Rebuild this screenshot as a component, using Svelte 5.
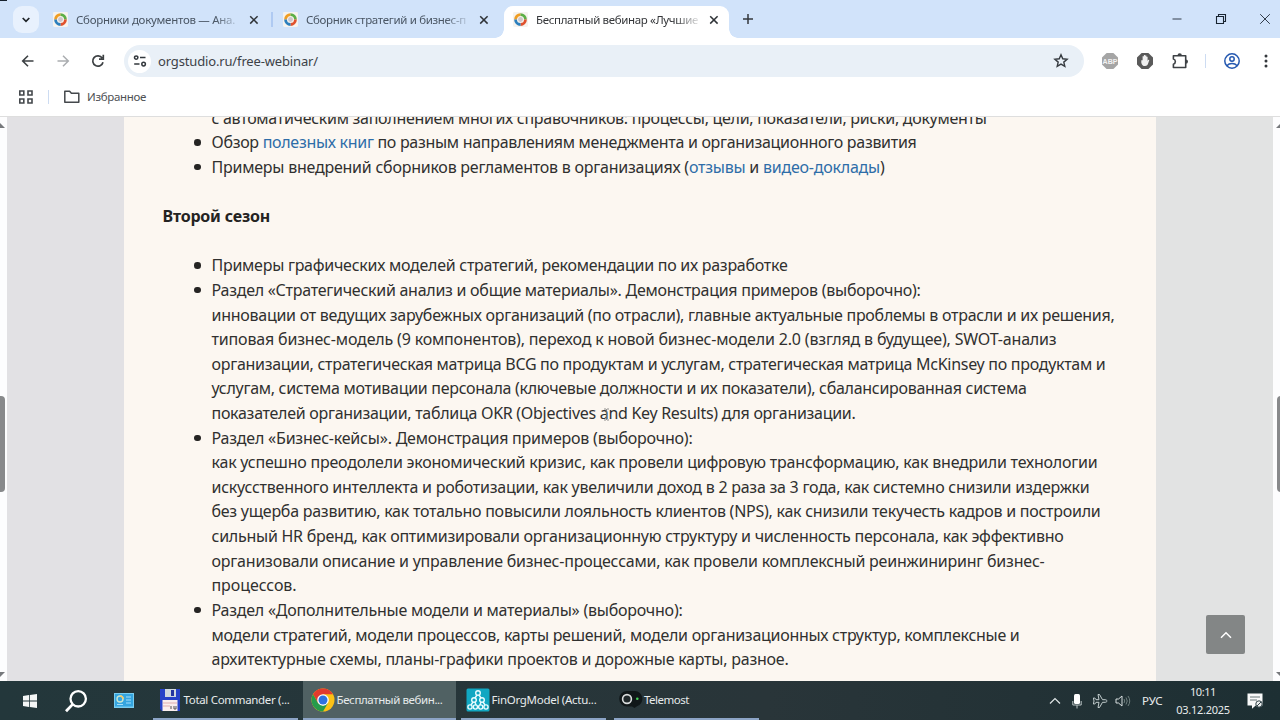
<script>
  const tabs = [
    { title: "Сборники документов — Ана.", width: 159 },
    { title: "Сборник стратегий и бизнес-п", width: 160 },
    { title: "Бесплатный вебинар «Лучшие", width: 162, active: true },
  ];

  // each line is [width, ...parts]; linked parts are { linked }
  const first = [
    { lines: [[775, "с автоматическим заполнением многих справочников: процессы, цели, показатели, риски, документы"]], cont: true },
    { lines: [[705, "Обзор ", { linked: "полезных книг" }, " по разным направлениям менеджмента и организационного развития"]] },
    { lines: [[673, "Примеры внедрений сборников регламентов в организациях (", { linked: "отзывы" }, " и ", { linked: "видео-доклады" }, ")"]] },
  ];

  const second = [
    { lines: [[576, "Примеры графических моделей стратегий, рекомендации по их разработке"]] },
    {
      lines: [
        [709, "Раздел «Стратегический анализ и общие материалы». Демонстрация примеров (выборочно):"],
        [903, "инновации от ведущих зарубежных организаций (по отрасли), главные актуальные проблемы в отрасли и их решения,"],
        [845, "типовая бизнес-модель (9 компонентов), переход к новой бизнес-модели 2.0 (взгляд в будущее), SWOT-анализ"],
        [894, "организации, стратегическая матрица BCG по продуктам и услугам, стратегическая матрица McKinsey по продуктам и"],
        [815, "услугам, система мотивации персонала (ключевые должности и их показатели), сбалансированная система"],
        [644, "показателей организации, таблица OKR (Objectives and Key Results) для организации."],
      ],
    },
    {
      lines: [
        [481, "Раздел «Бизнес-кейсы». Демонстрация примеров (выборочно):"],
        [886, "как успешно преодолели экономический кризис, как провели цифровую трансформацию, как внедрили технологии"],
        [878, "искусственного интеллекта и роботизации, как увеличили доход в 2 раза за 3 года, как системно снизили издержки"],
        [889, "без ущерба развитию, как тотально повысили лояльность клиентов (NPS), как снизили текучесть кадров и построили"],
        [852, "сильный HR бренд, как оптимизировали организационную структуру и численность персонала, как эффективно"],
        [833, "организовали описание и управление бизнес-процессами, как провели комплексный реинжиниринг бизнес-"],
        [85, "процессов."],
      ],
    },
    {
      lines: [
        [471, "Раздел «Дополнительные модели и материалы» (выборочно):"],
        [808, "модели стратегий, модели процессов, карты решений, модели организационных структур, комплексные и"],
        [577, "архитектурные схемы, планы-графики проектов и дорожные карты, разное."],
      ],
    },
  ];

  const tasks = [
    { icon: "floppy", title: "Total Commander (...", width: 106 },
    { icon: "chrome", title: "Бесплатный вебин...", width: 106, active: true },
    { icon: "model", title: "FinOrgModel (Actu...", width: 105 },
    { icon: "telemost", title: "Telemost", width: 45 },
  ];

  // spread the letters so that the text takes the given width
  function fit(node, width) {
    const now = node.getBoundingClientRect().width;
    const count = node.textContent.length;
    node.style.letterSpacing = (width - now) / count + "px";
  }
</script>

{#snippet favicon()}
  <svg class="favicon" viewBox="0 0 16 16">
    <rect width="16" height="16" rx="1.5" fill="#f6f3ee" />
    <g fill="none" stroke-width="3">
      <path d="M2.7 8A5.3 5.3 0 0 1 8 2.7" stroke="#ef9d24" />
      <path d="M8 2.7A5.3 5.3 0 0 1 13.3 8" stroke="#5daf46" />
      <path d="M13.3 8A5.3 5.3 0 0 1 8 13.3" stroke="#e0512d" />
      <path d="M8 13.3A5.3 5.3 0 0 1 2.7 8" stroke="#2c7fbd" />
    </g>
    <circle cx="8" cy="8" r="2.6" fill="#cfc6c8" />
  </svg>
{/snippet}

{#snippet cross()}
  <svg class="cross" viewBox="0 0 10 10"><path d="M1.2 1.2l7.4 7.4M8.6 1.2L1.2 8.6" stroke="#303438" stroke-width="1.5" /></svg>
{/snippet}

{#snippet list(items)}
  <ul>
    {#each items as item}
      <li class:cont={item.cont}>
        {#each item.lines as [width, ...parts]}
          <div class="line"><span use:fit={width}>{#each parts as p}{#if p.linked}<a href="#top">{p.linked}</a>{:else}{p}{/if}{/each}</span></div>
        {/each}
      </li>
    {/each}
  </ul>
{/snippet}

<div class="screen">
  <div class="tabstrip">
    <i class="corner"></i>
    <div class="search-tabs">
      <svg width="10" height="8" viewBox="0 0 10 8"><path d="M1.7 2L5 5.3 8.3 2" fill="none" stroke="#1f2428" stroke-width="1.7" /></svg>
    </div>
    {#each tabs as tab}
      <div class="tab" class:active={tab.active}>
        {@render favicon()}
        <div class="title"><span use:fit={tab.width}>{tab.title}</span></div>
        {@render cross()}
      </div>
    {/each}
    <svg class="plus" width="12" height="12" viewBox="0 0 12 12"><path d="M6 1v10M1 6h10" stroke="#34383d" stroke-width="1.5" /></svg>
    <div class="window-buttons">
      <svg width="12" height="12" viewBox="0 0 12 12"><path d="M1.5 6h9" stroke="#333d4a" /></svg>
      <svg width="12" height="12" viewBox="0 0 12 12" fill="none" stroke="#182430"><path d="M1.5 3.5h7v7h-7zM3.5 3V1.5h7v7H9" stroke-width="1.1" /></svg>
      <svg width="12" height="12" viewBox="0 0 12 12"><path d="M1.2 1.2l9.6 9.6M10.8 1.2l-9.6 9.6" stroke="#333d4a" /></svg>
    </div>
  </div>

  <div class="toolbar">
    <div class="nav">
      <svg width="16" height="16" viewBox="0 0 16 16" fill="none" stroke="#3c4043" stroke-width="1.6"><path d="M13.5 8H3M8 2.7L2.7 8 8 13.3" /></svg>
      <svg width="16" height="16" viewBox="0 0 16 16" fill="none" stroke="#aaadb0" stroke-width="1.5"><path d="M2.5 8H13M8 2.7L13.3 8 8 13.3" /></svg>
      <svg width="16" height="16" viewBox="0 0 16 16" fill="none" stroke="#3c4043" stroke-width="1.7"><path d="M13 9.2A5.2 5.2 0 1 1 12.2 5M13.3 1.8v4.4H9" /></svg>
    </div>
    <div class="omnibox">
      <div class="site-info">
        <svg width="14" height="14" viewBox="0 0 14 14" fill="none" stroke="#33383d" stroke-width="1.5"><circle cx="3.2" cy="3.6" r="1.7" /><path d="M7 3.6h5.5M1.2 10.1h5.3" /><circle cx="10.6" cy="10.1" r="1.8" /></svg>
      </div>
      <span class="url"><span use:fit={160}>orgstudio.ru/free-webinar/</span></span>
      <svg class="star" width="16" height="16" viewBox="0 0 16 16"><path d="M8 1.8l1.75 4 4.35.4-3.3 2.9 1 4.3L8 11.1l-3.8 2.3 1-4.3-3.3-2.9 4.35-.4z" fill="none" stroke="#363b40" stroke-width="1.4" /></svg>
    </div>
    <div class="extensions">
      <svg width="18" height="18" viewBox="0 0 18 18"><path d="M5.6 1h6.8L17 5.6v6.8L12.4 17H5.6L1 12.4V5.6z" fill="#a5a5a5" /><text x="9" y="12" text-anchor="middle" fill="#f2f2f2">ABP</text></svg>
      <svg width="18" height="18" viewBox="0 0 18 18"><path d="M5.6 1h6.8L17 5.6v6.8L12.4 17H5.6L1 12.4V5.6z" fill="#5a5a5a" /><path d="M5.3 8.3v2.4c.6 2.1 1.6 3.4 3.7 3.4 1.9 0 2.8-1.1 3.3-3l1-3.1c-.7-.6-1.2-.2-1.7 1V4.8h-1.2V3.6H9.1v-.5H7.9v1.1H6.6v4z" fill="#f1f1f1" /></svg>
      <svg width="18" height="18" viewBox="0 0 18 18"><path d="M2.4 3.7H14.7V15.5H2.4V12.3C5 11.6 5 7.6 2.4 7z" fill="none" stroke="#3d4145" stroke-width="1.6" stroke-linejoin="round" /><path d="M6.5 3.5a2.2 2.2 0 0 1 4.4 0zM14.8 7.4a2.2 2.2 0 0 1 0 4.4z" fill="#3d4145" /></svg>
    </div>
    <i class="sep"></i>
    <svg class="profile" width="18" height="18" viewBox="0 0 18 18" fill="none" stroke="#2458b0" stroke-width="1.5"><circle cx="9" cy="9" r="7.2" /><circle cx="9" cy="7" r="2.2" /><path d="M3.8 13.8c2.8-3 7.6-3 10.4 0" /></svg>
    <svg class="more" width="4" height="16" viewBox="0 0 4 16" fill="#34383c"><circle cx="2" cy="3" r="1.5" /><circle cx="2" cy="8" r="1.5" /><circle cx="2" cy="13" r="1.5" /></svg>
  </div>

  <div class="bookmarks">
    <svg width="16" height="16" viewBox="0 0 16 16" fill="none" stroke="#44484c" stroke-width="1.6"><path d="M1.8 2h4v4h-4zM10 2h4v4h-4zM1.8 10h4v4h-4zM10 10h4v4h-4z" /></svg>
    <i class="sep"></i>
    <svg class="folder" width="18" height="16" viewBox="0 0 18 16"><path d="M1.8 2.2h4.8l1.8 2h7.4v9H1.8z" fill="none" stroke="#44484c" stroke-width="1.5" stroke-linejoin="round" /></svg>
    <span><span use:fit={59}>Избранное</span></span>
  </div>

  <div class="page">
    <div class="scroll left"><i class="up"></i><i class="thumb"></i><i class="down"></i></div>
    <main>
      {@render list(first)}
      <h2><span use:fit={107.5}>Второй сезон</span></h2>
      {@render list(second)}
    </main>
    <div class="scroll right"><i class="up"></i><i class="thumb"></i><i class="down"></i></div>
    <button class="to-top" aria-label="Наверх">
      <svg width="14" height="10" viewBox="0 0 14 10"><path d="M2 7.7l5-5 5 5" fill="none" stroke="#fff" stroke-width="1.5" /></svg>
    </button>
    <svg class="caret" width="7" height="13" viewBox="0 0 7 13"><path d="M1 1h2l.5.5L4 1h2M3.5 1.5v10M1 12h2l.5-.5.5.5h2" fill="none" stroke="#777" stroke-width=".8" /></svg>
  </div>

  <div class="taskbar">
    <svg class="start" width="14" height="14" viewBox="0 0 14 14" fill="#f4f6f6"><path d="M0 2l6-.9v5.5H0zM6.8 1L14 0v6.6H6.8zM0 7.4h6v5.5L0 12zM6.8 7.4H14V14l-7.2-1z" /></svg>
    <svg class="search" width="24" height="24" viewBox="0 0 24 24" fill="none" stroke="#fff" stroke-width="2.3"><circle cx="14.2" cy="9.8" r="7.7" /><path d="M8.6 15.4L2 22.3" stroke-width="2.8" /></svg>
    <svg class="panel" width="20" height="16" viewBox="0 0 20 16"><rect width="20" height="15" fill="#79cdf1" /><rect x="1" y="1" width="18" height="12.5" fill="#35a5df" /><circle cx="6" cy="6" r="3" fill="none" stroke="#c8e6d1" stroke-width="1.4" /><path d="M6 3a3 3 0 0 1 3 3" fill="none" stroke="#f4ca69" stroke-width="1.5" /><path d="M12 4h5M12 7h5M12 10h5M3 11.5h6" stroke="#a5defa" /></svg>
    {#each tasks as task}
      <div class="task" class:active={task.active}>
        {#if task.icon === "floppy"}
          <svg width="24" height="24" viewBox="0 0 24 24"><path d="M2 1h20v22H4l-2-2z" fill="#2642c8" /><path d="M7 1h11v8H7z" fill="#cfd8df" /><path d="M13 2h3v6h-3z" fill="#2436a0" /><path d="M4.5 12h15v11h-15z" fill="#faeeed" /><path d="M5 15h14M5 18h7" stroke="#dfaeb0" /><path d="M13 18v3M16 18v3h2v-3" stroke="#555" fill="none" /></svg>
        {:else if task.icon === "chrome"}
          <svg width="24" height="24" viewBox="0 0 24 24"><circle cx="12" cy="12" r="11.5" fill="#fbc116" /><path d="M2 6.3A11.5 11.5 0 0 1 22 6.3H12L7 14.9z" fill="#e33b2e" /><path d="M2 6.3l5 8.6 5 2.8 5-2.8-5 8.6A11.5 11.5 0 0 1 2 6.3" fill="#269b4b" /><circle cx="12" cy="12" r="5.8" fill="#fff" /><circle cx="12" cy="12" r="4.5" fill="#2f72df" /></svg>
        {:else if task.icon === "model"}
          <svg width="24" height="24" viewBox="0 0 24 24"><rect x=".5" y=".5" width="23" height="23" rx="1.5" fill="#11a7c2" /><g fill="none" stroke="#e9fcff" stroke-width="1.4"><path d="M11 7l-2 3M13 7l2 3M7 14l-2 3M9 14l1 3M15 14l-1 3M17 14l2 3" /><circle cx="12" cy="5" r="2.3" /><circle cx="8" cy="12" r="2.3" /><circle cx="16" cy="12" r="2.3" /><circle cx="4" cy="19" r="2.1" /><circle cx="9.4" cy="19" r="2.1" /><circle cx="14.7" cy="19" r="2.1" /><circle cx="20" cy="19" r="2.1" /></g></svg>
        {:else}
          <svg width="24" height="24" viewBox="0 0 24 24"><path d="M8 3h8a7.8 7.8 0 0 1 2 15.2L15.5 20 13 18.6H8A7.8 7.8 0 0 1 8 3" fill="#101719" /><circle cx="8" cy="11" r="4.4" fill="#20282a" stroke="#dadddd" stroke-width="1.6" /><circle cx="18.3" cy="10.7" r="1.3" fill="#45cf58" /></svg>
        {/if}
        <span class="label"><span use:fit={task.width}>{task.title}</span></span>
      </div>
    {/each}
    <div class="tray">
      <svg width="12" height="12" viewBox="0 0 12 12"><path d="M1 8.5l5-5 5 5" fill="none" stroke="#dfe5e6" stroke-width="1.2" /></svg>
      <svg width="10" height="16" viewBox="0 0 10 16"><rect x="2" y="1" width="6" height="10" rx="1.5" fill="#fff" /><path d="M.8 8v4h8.4V8M5 12v3.5" fill="none" stroke="#b9c3c4" /></svg>
      <svg width="16" height="16" viewBox="0 0 16 16"><path d="M15 8c0-.8-1-1.3-2-1.3h-2.5L7.5 1.5H6l1 5.2H4L2.8 5H1.4L2 8l-.6 3h1.4L4 9.3h3l-1 5.2h1.5l3-5.2H13c1 0 2-.5 2-1.3z" fill="none" stroke="#c3cdce" /></svg>
      <svg width="16" height="14" viewBox="0 0 16 14" fill="none"><path d="M1 5h2.5L7 2v10L3.5 9H1z" stroke="#d8dfe0" /><path d="M9 5q1.5 2 0 4M11 3.5q2.5 3.5 0 7M13 2q3.5 5 0 10" stroke="#70807f" /></svg>
    </div>
    <span class="lang"><span use:fit={20.5}>РУС</span></span>
    <div class="clock"><span><span use:fit={26}>10:11</span></span><span><span use:fit={53.5}>03.12.2025</span></span></div>
    <svg class="notes" width="18" height="18" viewBox="0 0 18 18"><path d="M1.5 1.5h15v12H9.7L6 16.8v-3.3H1.5z" fill="#f8f9f9" /><path d="M4 5h10M4 8h7" stroke="#677577" /><circle cx="13" cy="12" r="3.2" fill="#ecefef" stroke="#304247" /><path d="M11 14l4-4" stroke="#304247" /></svg>
  </div>
</div>

<style>
  :global(body) { margin: 0; }

  .screen {
    width: 1280px;
    height: 720px;
    overflow: hidden;
    display: flex;
    flex-direction: column;
    background: #fff;
    color: #30302f;
    font-family: "Noto Sans", "Open Sans", sans-serif;
    white-space: nowrap;
  }
  svg { display: block; flex: none; }
  i { display: block; flex: none; }

  .tabstrip {
    position: relative;
    box-sizing: border-box;
    height: 38px;
    flex: none;
    display: flex;
    padding: 6px 8px 0 13px;
    background: #d1e3fa;
  }
  .corner { position: absolute; top: 0; left: 0; width: 7px; height: 1px; background: #17212d; }
  .search-tabs {
    width: 26px;
    height: 27px;
    border-radius: 9px;
    background: #e8f1fd;
    display: grid;
    place-items: center;
  }
  .tab {
    position: relative;
    box-sizing: border-box;
    width: 230px;
    height: 32px;
    display: flex;
    align-items: flex-start;
    padding: 6px 0 0 14px;
    color: #4a5664;
    font-size: 11.5px;
  }
  .tab:nth-of-type(2)::after {
    content: "";
    position: absolute;
    top: 6px;
    right: -4px;
    width: 2px;
    height: 15px;
    background: #afcaf2;
  }
  .tab.active { width: 225px; margin-left: 5px; padding-left: 9px; background: #fff; border-radius: 9px 9px 0 0; color: #343639; }
  .tab.active::before, .tab.active::after {
    content: "";
    position: absolute;
    bottom: 0;
    width: 9px;
    height: 9px;
  }
  .tab.active::before { left: -9px; background: radial-gradient(circle at 0 0, #d1e3fa 8.5px, #fff 9px); }
  .tab.active::after { right: -9px; background: radial-gradient(circle at 100% 0, #d1e3fa 8.5px, #fff 9px); }
  .favicon { width: 15px; height: 15px; }
  .title {
    width: 163px;
    margin-left: 8px;
    line-height: 16px;
    mask-image: linear-gradient(90deg, #000 139px, transparent 166px);
  }
  .cross { width: 10px; height: 10px; margin: 3px 0 0 10px; }
  .plus { margin: 7px 0 0 13px; }
  .window-buttons { display: flex; gap: 32px; margin: 7px 0 0 auto; }
  .window-buttons svg:last-child { margin-right: 1px; }

  .toolbar {
    position: relative;
    height: 46px;
    flex: none;
    display: flex;
    align-items: center;
    padding-left: 20px;
  }
  .nav { display: flex; gap: 19px; width: 104px; }
  .omnibox {
    box-sizing: border-box;
    width: 960px;
    height: 32px;
    display: flex;
    align-items: center;
    padding: 0 15px 0 4px;
    border-radius: 16px;
    background: #e9f0f7;
  }
  .site-info { width: 23px; height: 23px; border-radius: 50%; background: #fff; display: grid; place-items: center; }
  .url { margin-left: 7px; font-size: 13px; color: #3d4248; }
  .star { margin-left: auto; }
  .extensions { display: flex; gap: 17px; margin-left: 17px; }
  .extensions text { font: bold 7px "Liberation Sans", sans-serif; }
  .sep { width: 1px; height: 14px; background: #cddcf2; }
  .toolbar .sep { margin-left: 16px; }
  .profile { margin-left: 17px; }
  .more { margin-left: 23px; }

  .bookmarks {
    box-sizing: border-box;
    height: 33px;
    flex: none;
    display: flex;
    align-items: center;
    padding: 0 0 7px 18px;
    border-bottom: 1px solid #dedede;
    font-size: 11.5px;
    color: #4e5154;
  }
  .bookmarks .sep { margin: 0 14px 0 14px; }
  .bookmarks > span { margin-left: 6px; }

  .page {
    position: relative;
    box-sizing: border-box;
    height: 564px;
    flex: none;
    display: flex;
    overflow: hidden;
    background: linear-gradient(90deg, #e2e1e4 50%, #e2e3e3 50%);
  }
  .scroll { position: relative; width: 7px; flex: none; overflow: hidden; background: #fdfdfe; }
  .scroll.right { margin-left: auto; }
  .thumb { position: absolute; top: 279px; width: 9px; height: 96px; border-radius: 4px; background: #88898b; }
  .left .thumb { right: 2px; }
  .right .thumb { left: 4px; }
  .up, .down { position: absolute; border: 5px solid transparent; }
  .left i.up, .left i.down { left: -5px; }
  .right i.up, .right i.down { left: 3px; }
  .up { top: 6px; border-bottom-color: #77797c; border-top: 0; }
  .down { top: 555px; border-top-color: #77797c; border-bottom: 0; }
  main {
    box-sizing: border-box;
    width: 1032px;
    height: 564px;
    margin-left: 117px;
    padding-left: 38.5px;
    background: #fcf7f1;
    font-size: 16px;
    line-height: 24.62px;
  }
  ul { margin: 0; padding: 0 0 0 49px; list-style: none; }
  ul:first-child { margin-top: -11.3px; }
  li { position: relative; }
  li::before {
    content: "";
    position: absolute;
    left: -17.5px;
    top: 9px;
    width: 6.5px;
    height: 6.5px;
    border-radius: 50%;
    background: #252423;
  }
  li.cont::before { display: none; }
  .line { height: 24.62px; }
  a { color: #2e6da8; text-decoration: none; }
  h2 { margin: 24.62px 0; font-size: 16px; line-height: 24.62px; font-weight: 700; color: #242322; }
  .to-top {
    position: absolute;
    left: 1206px;
    top: 498px;
    width: 39px;
    height: 39px;
    padding: 0;
    border: 0;
    border-radius: 2px;
    background: #838686;
    display: grid;
    place-items: center;
  }
  .caret { position: absolute; left: 603px; top: 291px; }

  .taskbar {
    box-sizing: border-box;
    height: 39px;
    flex: none;
    display: flex;
    align-items: center;
    padding-left: 23px;
    background: linear-gradient(90deg, #23373b, #293539 60%, #1d2f33);
    color: #e7ebec;
    font-size: 11.5px;
  }
  .search { margin-left: 27px; }
  .panel { margin: 0 10px 0 26px; }
  .task {
    box-sizing: border-box;
    width: 145px;
    height: 39px;
    margin-left: 8.5px;
    padding-left: 5px;
    display: flex;
    align-items: center;
    border-bottom: 2px solid #8ca4c6;
  }
  .task.active { width: 153px; margin-left: 5px; padding-left: 8px; background: #506163; }
  .task.active + .task { margin-left: 5px; }
  .label { margin-left: 2px; }
  .task:nth-of-type(4) .label { margin-left: 1px; }
  .tray { display: flex; align-items: center; gap: 9px; margin-left: auto; }
  .tray svg:nth-child(2) { margin-left: 2px; }
  .tray svg:nth-child(n + 3) { margin-left: 1px; }
  .tray svg:nth-child(4) { margin-left: -2px; }
  .lang { margin-left: 11px; width: 22px; }
  .clock {
    width: 54px;
    margin-left: 12px;
    display: flex;
    flex-direction: column;
    align-items: center;
    font-size: 11px;
    line-height: 18px;
  }
  .notes { margin: 0 16px 0 16px; }
</style>
